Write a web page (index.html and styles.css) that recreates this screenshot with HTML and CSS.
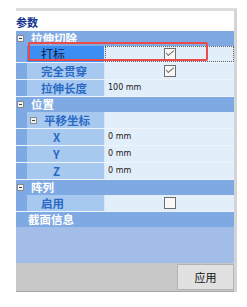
FILE: index.html
```html
<!DOCTYPE html>
<html>
<head>
<meta charset="utf-8">
<link rel="stylesheet" href="styles.css">
</head>
<body>
<div class="panel">
  <div class="title">参数</div>
  <div class="grid">
    <div class="cat"><span class="tog"></span><span class="cat-text">拉伸切除</span></div>
    <div class="row sel">
      <div class="ind"></div><div class="name">打标</div>
      <div class="val focus"><span class="cb on"></span></div>
    </div>
    <div class="row">
      <div class="ind"></div><div class="name">完全贯穿</div>
      <div class="val center"><span class="cb on"></span></div>
    </div>
    <div class="row">
      <div class="ind"></div><div class="name">拉伸长度</div>
      <div class="val">100 mm</div>
    </div>
    <div class="cat"><span class="tog"></span><span class="cat-text">位置</span></div>
    <div class="row">
      <div class="ind"></div><div class="name sub"><span class="tog"></span>平移坐标</div>
      <div class="val"></div>
    </div>
    <div class="row">
      <div class="ind"></div><div class="name deep">X</div>
      <div class="val">0 mm</div>
    </div>
    <div class="row">
      <div class="ind"></div><div class="name deep">Y</div>
      <div class="val">0 mm</div>
    </div>
    <div class="row">
      <div class="ind"></div><div class="name deep">Z</div>
      <div class="val">0 mm</div>
    </div>
    <div class="cat"><span class="tog"></span><span class="cat-text">阵列</span></div>
    <div class="row">
      <div class="ind"></div><div class="name">启用</div>
      <div class="val center"><span class="cb"></span></div>
    </div>
    <div class="cat"><span class="cat-text nog">截面信息</span></div>
  </div>
  <div class="fill"></div>
  <div class="bar"><button class="btn">应用</button></div>
  <div class="hl"></div>
</div>
</body>
</html>
```
FILE: styles.css
```css
html, body {
  margin: 0;
  padding: 0;
  background: #ffffff;
}
body {
  font-family: "Noto Sans CJK SC", "Liberation Sans", sans-serif;
}
.panel {
  position: relative;
  margin: 8px 0 0 16px;
  width: 218px;
  border-top: 3px solid #dcdcdc;
  border-right: 3px solid #d4d4d4;
  display: flex;
  flex-direction: column;
}
.title {
  height: 20px;
  line-height: 22px;
  font-size: 11px;
  font-weight: bold;
  color: #14338c;
}
.grid {
  display: flex;
  flex-direction: column;
}
.cat {
  height: 15px;
  background: #7ea9e2;
  display: flex;
  align-items: center;
  color: #ffffff;
  font-size: 11.5px;
  font-weight: bold;
  line-height: 15px;
}
.tog {
  width: 5px;
  height: 5px;
  border: 1px solid #8a8a8a;
  background: #f2f2f2;
  position: relative;
  flex: none;
}
.tog::after {
  content: "";
  position: absolute;
  left: 1px;
  top: 2px;
  width: 3px;
  height: 1px;
  background: #404040;
}
.cat > .tog {
  margin-left: 1px;
}
.cat-text {
  margin-left: 7px;
}
.cat-text.nog {
  margin-left: 12px;
}
.row {
  height: 16px;
  display: flex;
  border-bottom: 1px solid #eef4fb;
}
.ind {
  width: 11px;
  background: #7ea9e2;
  flex: none;
}
.name {
  width: 63px;
  padding-left: 14px;
  background: #a7c9ef;
  color: #2a69c6;
  font-size: 11.5px;
  font-weight: bold;
  line-height: 16px;
  border-right: 1px solid #d8e6f6;
  display: flex;
  align-items: center;
  white-space: nowrap;
}
.name.sub {
  padding-left: 3px;
  width: 74px;
}
.name.sub .tog {
  margin-right: 7px;
}
.name.deep {
  padding-left: 26px;
  width: 51px;
}
.sel .name {
  background: #3d8ef2;
  color: #101c40;
  font-weight: normal;
  font-size: 12px;
}
.val {
  flex: 1;
  background: #e2eefa;
  font-family: "DejaVu Sans", sans-serif;
  font-size: 8px;
  color: #202020;
  line-height: 16px;
  padding-left: 3px;
  display: flex;
  align-items: center;
}
.val.center, .val.focus {
  justify-content: center;
  padding-left: 0;
}
.val.focus {
  border: 1px dotted #606060;
  box-sizing: border-box;
}
.cb {
  width: 10px;
  height: 10px;
  border: 1px solid #6e6e6e;
  background: #f8f8f8;
  position: relative;
  display: block;
}
.cb.on::after {
  content: "";
  position: absolute;
  left: 1px;
  top: 1px;
  width: 7px;
  height: 3px;
  border-left: 1px solid #6a6a6a;
  border-bottom: 1px solid #6a6a6a;
  transform: rotate(-40deg);
  transform-origin: center;
}
.fill {
  height: 36px;
  background: #a2bee8;
}
.bar {
  height: 28px;
  background: #c8c8c8;
  border-bottom: 1px solid #a6a6a6;
  display: flex;
  justify-content: flex-end;
  align-items: center;
}
.btn {
  width: 57px;
  height: 26px;
  margin: 0;
  background: #e1e1e1;
  border: 1px solid #b4b4b4;
  font-family: "Noto Sans CJK SC", sans-serif;
  font-size: 11px;
  color: #111;
  padding: 0;
}
.hl {
  position: absolute;
  left: 12px;
  top: 31px;
  width: 176px;
  height: 15px;
  border: 2px solid #ea4a48;
  border-radius: 2px;
}
```
